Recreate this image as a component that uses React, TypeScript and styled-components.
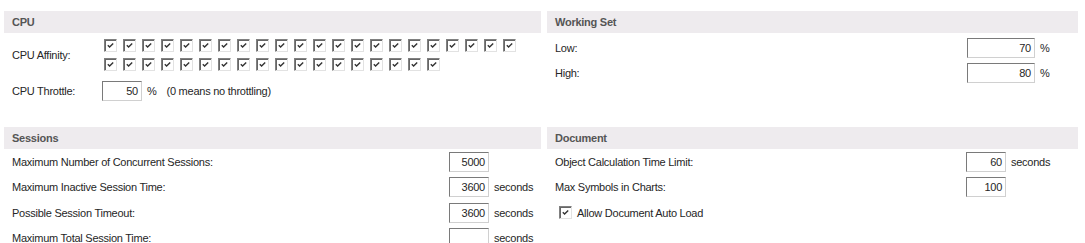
import React from "react";
import styled, { createGlobalStyle } from "styled-components";

const GlobalStyle = createGlobalStyle`
  html, body {
    margin: 0;
    padding: 0;
    background: #fff;
  }
  body {
    font-family: "Liberation Sans", Arial, sans-serif;
    font-size: 11px;
    letter-spacing: -0.25px;
    color: #262626;
  }
`;

function Check() {
  return (
    <svg width="9" height="9" viewBox="0 0 9 9">
      <path d="M1.8 4.2 L3.6 6 L7.2 2.4" fill="none" stroke="#333" strokeWidth="1.4" />
    </svg>
  );
}

function Field({ value, width, unit }: { value: string; width: number; unit?: string }) {
  return (
    <FieldGroup>
      <TextBox $width={width}>{value}</TextBox>
      {unit && <Unit>{unit}</Unit>}
    </FieldGroup>
  );
}

function App() {
  const cpus = Array.from({ length: 40 }, (_, i) => i);

  return (
    <>
      <GlobalStyle />
      <Page>
        <Section>
          <Header>CPU</Header>
          <Body $top={0}>
            <AffinityRow>
              <Label>CPU Affinity:</Label>
              <CheckGrid>
                {cpus.map((i) => (
                  <CheckBox key={i}>
                    <Check />
                  </CheckBox>
                ))}
              </CheckGrid>
            </AffinityRow>
            <Row $label={90} $height={25}>
              <Label>CPU Throttle:</Label>
              <FieldGroup>
                <TextBox $width={40}>50</TextBox>
                <Unit>%</Unit>
                <Note>(0 means no throttling)</Note>
              </FieldGroup>
            </Row>
          </Body>
        </Section>

        <Section>
          <Header>Working Set</Header>
          <Body $top={2}>
            <Row $label={412} $height={25}>
              <Label>Low:</Label>
              <Field value="70" width={68} unit="%" />
            </Row>
            <Row $label={412} $height={25}>
              <Label>High:</Label>
              <Field value="80" width={68} unit="%" />
            </Row>
          </Body>
        </Section>

        <Section>
          <Header>Sessions</Header>
          <Body $top={0}>
            <Row $label={437} $height={25.5}>
              <Label>Maximum Number of Concurrent Sessions:</Label>
              <Field value="5000" width={40} />
            </Row>
            <Row $label={437} $height={25.5}>
              <Label>Maximum Inactive Session Time:</Label>
              <Field value="3600" width={40} unit="seconds" />
            </Row>
            <Row $label={437} $height={25.5}>
              <Label>Possible Session Timeout:</Label>
              <Field value="3600" width={40} unit="seconds" />
            </Row>
            <Row $label={437} $height={25.5}>
              <Label>Maximum Total Session Time:</Label>
              <Field value="" width={40} unit="seconds" />
            </Row>
          </Body>
        </Section>

        <Section>
          <Header>Document</Header>
          <Body $top={0}>
            <Row $label={411} $height={25.5}>
              <Label>Object Calculation Time Limit:</Label>
              <Field value="60" width={40} unit="seconds" />
            </Row>
            <Row $label={411} $height={25.5}>
              <Label>Max Symbols in Charts:</Label>
              <Field value="100" width={40} />
            </Row>
            <OptionRow>
              <CheckBox>
                <Check />
              </CheckBox>
              <span>Allow Document Auto Load</span>
            </OptionRow>
          </Body>
        </Section>
      </Page>
    </>
  );
}

const Page = styled.div`
  width: 1085px;
  height: 243px;
  box-sizing: border-box;
  overflow: hidden;
  padding: 11px 0 0 4px;
  display: grid;
  grid-template-columns: 537px 531px;
  grid-template-rows: 116px auto;
  column-gap: 6px;
`;

const Section = styled.section`
  display: flex;
  flex-direction: column;
`;

const Header = styled.div`
  height: 22px;
  line-height: 22px;
  padding-left: 8px;
  background: #eeebee;
  color: #555;
  font-weight: bold;
`;

const Body = styled.div<{ $top: number }>`
  padding: ${(p) => p.$top}px 0 0 8px;
`;

const Row = styled.div<{ $label: number; $height: number }>`
  display: grid;
  grid-template-columns: ${(p) => p.$label}px auto;
  align-items: center;
  height: ${(p) => p.$height}px;
`;

const AffinityRow = styled.div`
  display: grid;
  grid-template-columns: 90px auto;
  align-items: center;
  padding-top: 6px;
  margin-bottom: 7px;
`;

const Label = styled.span`
  white-space: nowrap;
`;

const CheckGrid = styled.div`
  display: flex;
  flex-wrap: wrap;
  gap: 6px;
  width: 412px;
  padding-left: 2px;
`;

const CheckBox = styled.span`
  width: 13px;
  height: 13px;
  box-sizing: border-box;
  display: inline-flex;
  align-items: center;
  justify-content: center;
  background: #fff;
  border: 1px solid;
  border-color: #808080 #e2e2e2 #e2e2e2 #808080;
  box-shadow: inset 1px 1px 0 #666;
`;

const FieldGroup = styled.div`
  display: flex;
  align-items: center;
`;

const TextBox = styled.div<{ $width: number }>`
  width: ${(p) => p.$width}px;
  height: 20px;
  box-sizing: border-box;
  border: 1px solid;
  border-color: #7a7a7a #d0d0d0 #d0d0d0 #7a7a7a;
  text-align: right;
  line-height: 18px;
  padding-right: 3px;
`;

const Unit = styled.span`
  margin-left: 5px;
`;

const Note = styled.span`
  margin-left: 10px;
`;

const OptionRow = styled.div`
  display: flex;
  align-items: center;
  gap: 5px;
  height: 25.5px;
  padding-left: 4px;
`;

export default App;
